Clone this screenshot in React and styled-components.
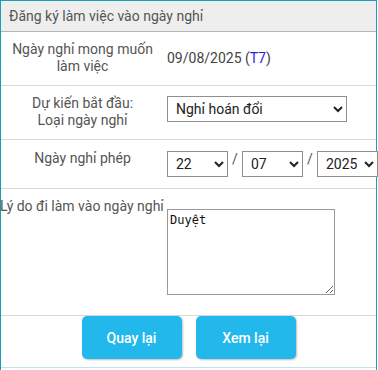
import React from 'react';
import styled, { createGlobalStyle } from 'styled-components';

const GlobalStyle = createGlobalStyle`
  html, body {
    margin: 0;
    padding: 0;
    background: #fff;
  }
  body {
    font-family: Roboto, "Noto Sans", sans-serif;
    font-size: 14px;
  }
`;

const Panel = styled.div`
  width: 377px;
  box-sizing: border-box;
  border: 1px solid #1a9fb3;
  border-bottom: none;
  min-height: 370px;
`;

const Header = styled.div`
  height: 30px;
  line-height: 30px;
  padding-left: 8px;
  background: #eeeeee;
  border-bottom: 1px solid #b5b5b5;
  color: #555;
  font-size: 14px;
`;

const Row = styled.div`
  display: grid;
  grid-template-columns: 163px 1fr;
  padding: ${(p) => p.$pad};
  border-bottom: 1px solid #d8d8d8;
`;

const Label = styled.div`
  color: #555;
  line-height: 17px;
  text-align: ${(p) => (p.$left ? 'left' : 'center')};
  white-space: ${(p) => (p.$left ? 'nowrap' : 'normal')};
  margin-left: ${(p) => (p.$left ? '-1px' : '0')};
  padding: ${(p) => (p.$left ? '0' : '0 8px')};
`;

const Value = styled.div`
  padding-left: 3px;
  padding-top: ${(p) => p.$top || 0}px;
  display: flex;
  align-items: ${(p) => (p.$top ? 'flex-start' : 'center')};
  color: #444;
  line-height: 17px;
  min-width: 0;
`;

const Day = styled.span`
  color: #1f1fe6;
`;

const Select = styled.select`
  width: ${(p) => p.$w}px;
  height: 26px;
  box-sizing: border-box;
  border: 1px solid #8f8f8f;
  border-radius: 0;
  background: #fff;
  color: #222;
  font-family: Roboto, "Noto Sans", sans-serif;
  font-size: 14px;
  padding: 0 4px;
  flex-shrink: 0;
`;

const Slash = styled.span`
  width: 14px;
  text-align: center;
  color: #555;
  flex-shrink: 0;
`;

const Reason = styled.textarea`
  width: 168px;
  height: 86px;
  box-sizing: border-box;
  border: 1px solid #9a9a9a;
  font-family: "DejaVu Sans Mono", monospace;
  font-size: 12px;
  padding: 3px 2px;
  color: #111;
  resize: both;
  margin: 0;
`;

const Actions = styled.div`
  display: flex;
  justify-content: center;
  gap: 14px;
  padding: 0 0 8px;
  border-bottom: 1px solid #c4e3e8;
`;

const Button = styled.button`
  width: 100px;
  height: 43px;
  border: none;
  border-radius: 5px;
  background: #22b8ec;
  color: #fff;
  font-family: Roboto, "Noto Sans", sans-serif;
  font-size: 14px;
  font-weight: 500;
  box-shadow: 1px 1px 2px rgba(0, 0, 0, 0.25);
  cursor: pointer;
`;

export default function App() {
  return (
    <>
      <GlobalStyle />
      <Panel>
        <Header>Đăng ký làm việc vào ngày nghỉ</Header>
        <Row $pad="9px 0 10px">
          <Label>Ngày nghỉ mong muốn làm việc</Label>
          <Value>
            <span>
              09/08/2025 (<Day>T7</Day>)
            </span>
          </Value>
        </Row>
        <Row $pad="9px 0 10px">
          <Label>
            Dự kiến bắt đầu:
            <br />
            Loại ngày nghỉ
          </Label>
          <Value $top={1}>
            <Select $w={180} defaultValue="hoandoi">
              <option value="hoandoi">Nghỉ hoán đổi</option>
              <option value="phep">Nghỉ phép</option>
            </Select>
          </Value>
        </Row>
        <Row $pad="10px 0 11px">
          <Label>Ngày nghỉ phép</Label>
          <Value $top={1}>
            <Select $w={61} defaultValue="22">
              <option value="22">22</option>
            </Select>
            <Slash>/</Slash>
            <Select $w={61} defaultValue="07">
              <option value="07">07</option>
            </Select>
            <Slash>/</Slash>
            <Select $w={61} defaultValue="2025">
              <option value="2025">2025</option>
            </Select>
          </Value>
        </Row>
        <Row $pad="9px 0 20px">
          <Label $left>Lý do đi làm vào ngày nghỉ</Label>
          <Value $top={11}>
            <Reason defaultValue="Duyệt" />
          </Value>
        </Row>
        <Actions>
          <Button>Quay lại</Button>
          <Button>Xem lại</Button>
        </Actions>
      </Panel>
    </>
  );
}
